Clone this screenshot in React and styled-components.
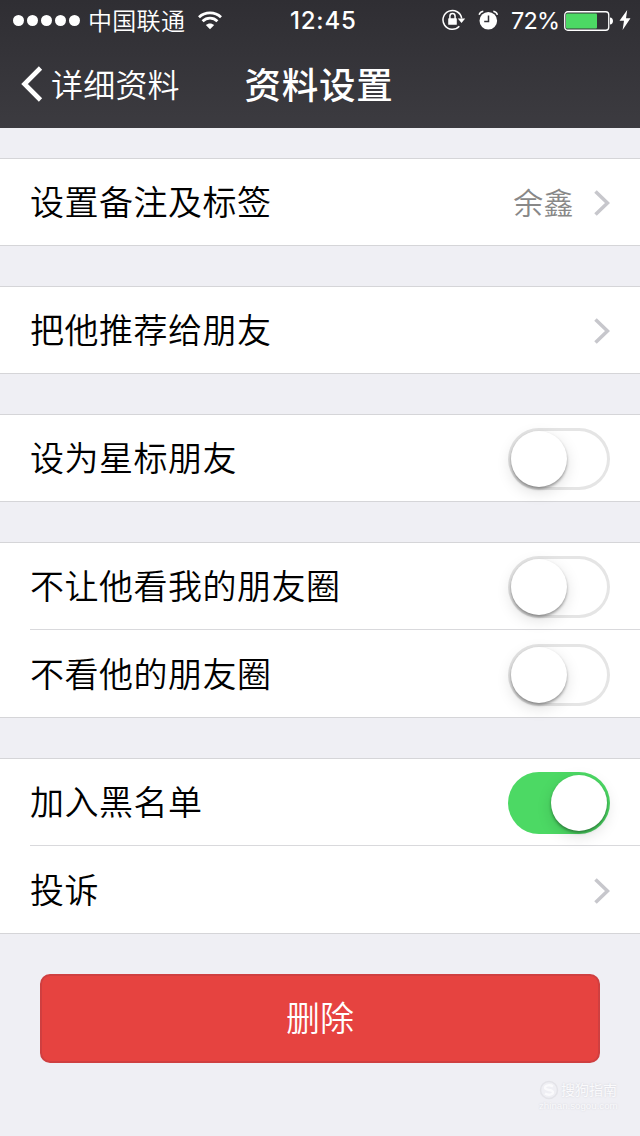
import React from "react";
import styled, { createGlobalStyle } from "styled-components";

const GlobalStyle = createGlobalStyle`
  * { box-sizing: border-box; }
  body {
    margin: 0;
    background: #efeff4;
    font-family: "Noto Sans CJK SC", sans-serif;
    -webkit-font-smoothing: antialiased;
  }
`;

const Screen = styled.div`
  width: 640px;
  height: 1136px;
  overflow: hidden;
  background: #efeff4;
  position: relative;
`;

const Header = styled.header`
  height: 128px;
  color: #fff;
  background: linear-gradient(#2f2e33, #3c3b40);
`;

const StatusBar = styled.div`
  height: 40px;
  padding: 0 9px 0 13px;
  display: grid;
  grid-template-columns: 277px 1fr auto;
  grid-template-rows: 40px;
  align-items: center;
`;

const StatusGroup = styled.div`
  display: flex;
  align-items: center;
  height: 40px;
`;

const Signal = styled.div`
  display: flex;
  gap: 3px;
  margin: 1px 8px 0 0;
`;

const Dot = styled.span`
  width: 11px;
  height: 11px;
  border-radius: 50%;
  background: #fff;
`;

const Carrier = styled.span`
  font-size: 24px;
  line-height: 40px;
  font-weight: 350;
  letter-spacing: 0.3px;
  margin-right: 13px;
`;

const Clock = styled.span`
  font: 500 24px/38px Inter, sans-serif;
  letter-spacing: 0.8px;
  padding-top: 2px;
`;

const Percent = styled.span`
  font: 400 23.5px/38px Inter, sans-serif;
  letter-spacing: -0.8px;
  padding-top: 2px;
  width: 53px;
  white-space: nowrap;
`;

const NavBar = styled.nav`
  height: 88px;
  display: grid;
  grid-template-columns: 1fr auto 1fr;
  align-items: center;
  padding: 0 23px 2px 21px;
`;

const Back = styled.div`
  display: flex;
  align-items: center;
  gap: 8px;
  font-size: 32px;
  line-height: 48px;
  font-weight: 350;
  letter-spacing: 0.2px;
`;

const Title = styled.h1`
  margin: 0;
  padding-top: 2px;
  font-size: 36.5px;
  line-height: 54px;
  font-weight: 500;
  letter-spacing: 0.8px;
`;

const Content = styled.main`
  padding-top: 30px;
`;

const Group = styled.section`
  background: #fff;
  border-top: 1px solid #d5d5d8;
  border-bottom: 1px solid #d5d5d8;
  margin-bottom: 40px;
  padding-left: 30px;
`;

const Row = styled.div`
  height: ${(p) => p.$height || 86}px;
  display: flex;
  align-items: center;
  justify-content: space-between;
  padding-right: 30px;
  & + & { border-top: 1px solid #d9d9dc; }
`;

const Label = styled.span`
  font-size: 34px;
  line-height: 50px;
  font-weight: 350;
  color: #000;
  letter-spacing: 0.5px;
  padding-bottom: 2px;
`;

const Accessory = styled.div`
  display: flex;
  align-items: center;
  gap: 20px;
`;

const Value = styled.span`
  font-size: 30px;
  line-height: 44px;
  font-weight: 350;
  color: #888;
  letter-spacing: 0.4px;
  padding-bottom: 2px;
`;

const Track = styled.div`
  width: 102px;
  height: 62px;
  margin-top: 2px;
  border-radius: 31px;
  padding: 3px;
  display: flex;
  justify-content: ${(p) => (p.$on ? "flex-end" : "flex-start")};
  background: ${(p) => (p.$on ? "#4cd964" : "#fff")};
  box-shadow: ${(p) => (p.$on ? "none" : "inset 0 0 0 3px #e5e5e5")};
`;

const Knob = styled.div`
  width: 56px;
  height: 56px;
  border-radius: 50%;
  background: #fff;
  box-shadow: 0 2px 3px rgba(0, 0, 0, 0.36), 0 5px 15px rgba(0, 0, 0, 0.13);
`;

const DeleteButton = styled.button`
  display: block;
  width: 560px;
  height: 89px;
  margin: 0 40px;
  padding: 0 0 3px;
  border: 2px solid #cf3f40;
  border-radius: 10px;
  background: #e64340;
  color: #fff;
  font: 350 34px/50px "Noto Sans CJK SC", sans-serif;
`;

const Watermark = styled.div`
  position: absolute;
  left: 539px;
  top: 1079px;
  width: 80px;
  color: #fafafc;
  text-shadow: 0 0 2px #cfcfd6;
`;

const Brand = styled.div`
  display: flex;
  align-items: center;
  gap: 2px;
  font-size: 14px;
  line-height: 21px;
  white-space: nowrap;
`;

const Site = styled.div`
  font: 9.7px/12px "Liberation Sans", sans-serif;
  white-space: nowrap;
`;

const Wifi = () => (
  <svg width="24" height="19" viewBox="0 0 24 19" fill="none" stroke="#fff" strokeWidth="2.8">
    <path d="M1 6.2C7 .5 17 .5 23 6.2" />
    <path d="M4.6 10.2C8.8 6.2 15.2 6.2 19.4 10.2" />
    <path d="M12 18.2L7.8 14.1C10.2 11.9 13.8 11.9 16.2 14.1Z" fill="#fff" stroke="none" />
  </svg>
);

const RotationLock = () => (
  <svg width="24" height="22" viewBox="0 0 24 22" style={{ marginRight: 12 }}>
    <path d="M17.3 17.3A9.4 9.4 0 1 1 19.7 9.5" fill="none" stroke="#fff" strokeWidth="1.5" />
    <path d="M15.8 9.5H23.2L19.5 14Z" fill="#fff" />
    <rect x="6.2" y="9.2" width="8.6" height="6.6" rx=".6" fill="#fff" />
    <path d="M7.9 10V7.2a2.6 2.6 0 0 1 5.2 0V10" fill="none" stroke="#fff" strokeWidth="1.5" />
  </svg>
);

const Alarm = () => (
  <svg width="20" height="20" viewBox="0 0 20 20" style={{ marginRight: 13 }}>
    <circle cx="10.3" cy="10.8" r="8.8" fill="#fff" />
    <path d="M1.100 4.800C1.700 2.800 3.300 1.500 5.300 1.200M19.400 4.800C18.900 2.800 17.300 1.500 15.300 1.200" fill="none" stroke="#fff" strokeWidth="1.5" />
    <path d="M10.5 5.500V11.500H6.200" fill="none" stroke="#333238" strokeWidth="1.5" />
  </svg>
);

const Battery = () => (
  <svg width="50" height="20" viewBox="0 0 50 20" style={{ marginRight: 5, marginTop: 1 }}>
    <rect x=".75" y=".75" width="44" height="18.5" rx="3" fill="none" stroke="#fff" strokeWidth="1.3" />
    <rect x="2" y="2.5" width="31" height="15" rx="1" fill="#4cd964" />
    <path d="M46 6.5c1.8.2 3 1.6 3 3.5s-1.2 3.3-3 3.5Z" fill="#fff" />
  </svg>
);

const Bolt = () => (
  <svg width="12" height="20" viewBox="0 0 12 20">
    <path d="M8.2 0L.5 10.8H5L3.6 20L11.5 8.3H7Z" fill="#fff" />
  </svg>
);

const BackChevron = () => (
  <svg width="22" height="36" viewBox="0 0 22 36" fill="none" stroke="#fff" strokeWidth="4.6" style={{ marginTop: 2 }}>
    <path d="M19.5 2L3.5 18L19.5 34" />
  </svg>
);

const Chevron = () => (
  <svg width="16" height="26" viewBox="0 0 16 26" fill="none" stroke="#c7c7cc" strokeWidth="3.6" style={{ marginTop: 2 }}>
    <path d="M1.5 1.5L13.5 13L1.5 24.5" />
  </svg>
);

const SogouMark = () => (
  <svg width="20" height="20" viewBox="0 0 20 20" fill="none" stroke="#fafafc">
    <circle cx="10" cy="10" r="8.5" stroke="#e3e3e8" strokeWidth="1.5" />
    <path d="M14 6.5C11 4.5 6 5 6 7.8C6 11 14 9 14 12.3C14 15 9 15.5 6 13.5" strokeWidth="2.3" />
  </svg>
);

const Switch = ({ on }) => (
  <Track $on={on} role="switch" aria-checked={!!on}>
    <Knob />
  </Track>
);

export default function App() {
  return (
    <Screen>
      <GlobalStyle />
      <Header>
        <StatusBar>
          <StatusGroup>
            <Signal>
              {[0, 1, 2, 3, 4].map((i) => <Dot key={i} />)}
            </Signal>
            <Carrier>中国联通</Carrier>
            <Wifi />
          </StatusGroup>
          <Clock>12:45</Clock>
          <StatusGroup>
            <RotationLock />
            <Alarm />
            <Percent>72%</Percent>
            <Battery />
            <Bolt />
          </StatusGroup>
        </StatusBar>
        <NavBar>
          <Back><BackChevron />详细资料</Back>
          <Title>资料设置</Title>
        </NavBar>
      </Header>
      <Content>
        <Group>
          <Row>
            <Label>设置备注及标签</Label>
            <Accessory><Value>余鑫</Value><Chevron /></Accessory>
          </Row>
        </Group>
        <Group>
          <Row><Label>把他推荐给朋友</Label><Chevron /></Row>
        </Group>
        <Group>
          <Row><Label>设为星标朋友</Label><Switch /></Row>
        </Group>
        <Group>
          <Row><Label>不让他看我的朋友圈</Label><Switch /></Row>
          <Row $height={88}><Label>不看他的朋友圈</Label><Switch /></Row>
        </Group>
        <Group>
          <Row><Label>加入黑名单</Label><Switch on /></Row>
          <Row $height={88}><Label>投诉</Label><Chevron /></Row>
        </Group>
        <DeleteButton>删除</DeleteButton>
      </Content>
      <Watermark>
        <Brand><SogouMark />搜狗指南</Brand>
        <Site>zhinan.sogou.com</Site>
      </Watermark>
    </Screen>
  );
}
